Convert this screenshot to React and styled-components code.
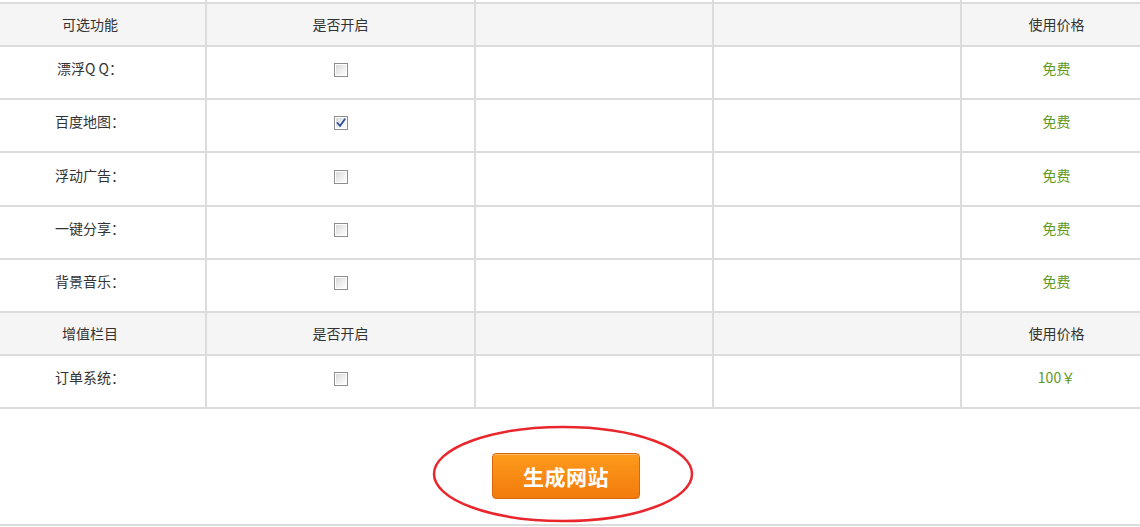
import React from "react";
import styled, { createGlobalStyle } from "styled-components";

const Global = createGlobalStyle`
  html, body { margin: 0; padding: 0; background: #fff; overflow: hidden; }
  body { font-family: "Noto Sans CJK SC", "Noto Sans", sans-serif; color: #333; }
`;

const Page = styled.div`
  width: 1140px;
  height: 527px;
  overflow: hidden;
  display: flex;
  flex-direction: column;
`;

const TableWrap = styled.div`
  margin-left: -27px;
  margin-top: -18px;
`;

const Table = styled.table`
  border-collapse: collapse;
  table-layout: fixed;
  width: 1178px;
  font-size: 14px;
`;

const Row = styled.tr`
  height: ${(p) => p.$h}px;
  background: ${(p) => (p.$head ? "#f5f5f5" : "#fff")};
`;

const Cell = styled.td`
  border: 2px solid #dcdcdc;
  text-align: center;
  vertical-align: middle;
  padding: 0 0 ${(p) => (p.$head ? 1 : 9)}px;
  color: ${(p) => (p.$price ? "#5f9a1e" : "#333")};
  white-space: nowrap;
`;

const Box = styled.span`
  display: inline-block;
  width: 14px;
  height: 14px;
  box-sizing: border-box;
  border: 1px solid #8e8e8e;
  background: linear-gradient(135deg, #d4d4d4 0%, #f2f2f2 60%, #ffffff 100%);
  box-shadow: inset 0 0 0 1px #fff;
  vertical-align: middle;
  position: relative;
`;

const Check = styled.svg`
  position: absolute;
  left: 1px;
  top: 1px;
`;

const Checkbox = ({ checked }) => (
  <Box>
    {checked && (
      <Check width="10" height="10" viewBox="0 0 10 10">
        <path d="M1.5 5 L4 8 L8.8 1.2" fill="none" stroke="#2c4ca0" strokeWidth="1.8" strokeLinecap="round" strokeLinejoin="round" />
      </Check>
    )}
  </Box>
);

const Footer = styled.div`
  flex: 1;
  display: flex;
  align-items: center;
  justify-content: center;
  padding-right: 14px;
  border-bottom: 2px solid #dcdcdc;
  margin-bottom: 1px;
`;

const ButtonArea = styled.div`
  position: relative;
  display: flex;
  align-items: center;
  justify-content: center;
  width: 262px;
  height: 98px;
  margin-top: 14px;
  padding: 4px 0 0 6px;
  box-sizing: border-box;
`;

const Button = styled.button`
  width: 148px;
  height: 46px;
  border: 1px solid #d9650a;
  border-radius: 4px;
  background: linear-gradient(#fe9b1c, #f27b0c);
  color: #fff;
  font-family: "Noto Sans CJK SC", sans-serif;
  font-size: 21px;
  font-weight: 700;
  letter-spacing: 0.5px;
  cursor: pointer;
  box-shadow: inset 0 1px 0 rgba(255, 255, 255, 0.35);
`;

const Ellipse = styled.svg`
  position: absolute;
  left: 0;
  top: 0;
  pointer-events: none;
`;

const cols = [232, 269, 238, 248, 191];

const features = [
  { name: "漂浮Q Q：", on: false },
  { name: "百度地图：", on: true },
  { name: "浮动广告：", on: false },
  { name: "一键分享：", on: false },
  { name: "背景音乐：", on: false },
];

const HeadRow = ({ title }) => (
  <Row $h={43} $head>
    <Cell $head>{title}</Cell>
    <Cell $head>是否开启</Cell>
    <Cell $head />
    <Cell $head />
    <Cell $head>使用价格</Cell>
  </Row>
);

const DataRow = ({ name, on, price, h = 53 }) => (
  <Row $h={h}>
    <Cell>{name}</Cell>
    <Cell><Checkbox checked={on} /></Cell>
    <Cell />
    <Cell />
    <Cell $price>{price}</Cell>
  </Row>
);

export default function App() {
  return (
    <Page>
      <Global />
      <TableWrap>
        <Table>
          <colgroup>
            {cols.map((w, i) => (
              <col key={i} style={{ width: w }} />
            ))}
          </colgroup>
          <tbody>
            <Row $h={20}>
              <Cell /><Cell /><Cell /><Cell /><Cell />
            </Row>
            <HeadRow title="可选功能" />
            {features.map((f, i) => (
              <DataRow key={f.name} name={f.name} on={f.on} price="免费" h={i === 2 ? 54 : 53} />
            ))}
            <HeadRow title="增值栏目" />
            <DataRow name="订单系统：" on={false} price="100￥" />
          </tbody>
        </Table>
      </TableWrap>
      <Footer>
        <ButtonArea>
          <Button>生成网站</Button>
          <Ellipse width="262" height="98" viewBox="0 0 262 98">
            <ellipse cx="131" cy="49" rx="129" ry="47" fill="none" stroke="#e8262b" strokeWidth="2.5" />
          </Ellipse>
        </ButtonArea>
      </Footer>
    </Page>
  );
}
